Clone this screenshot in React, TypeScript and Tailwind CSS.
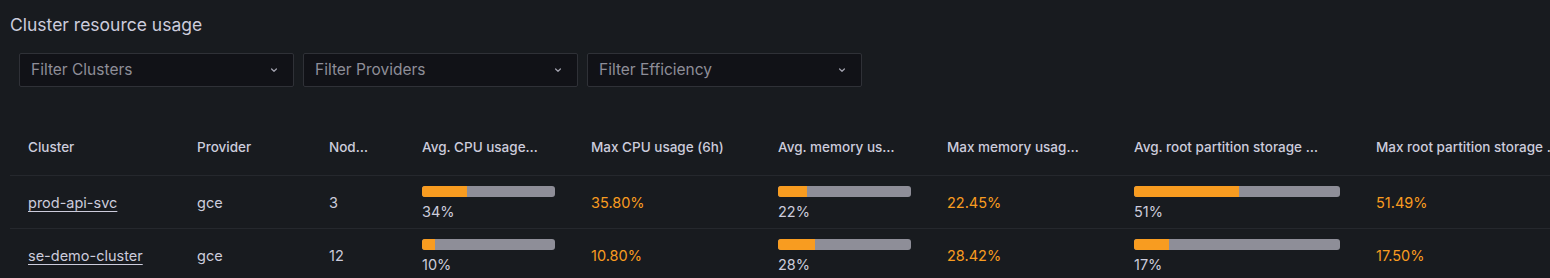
import React from "react";

const cols = [
  { key: "cluster", label: "Cluster", w: 169 },
  { key: "provider", label: "Provider", w: 132 },
  { key: "nodes", label: "Nodes", w: 93 },
  { key: "avgCpu", label: "Avg. CPU usage (6h)", w: 169 },
  { key: "maxCpu", label: "Max CPU usage (6h)", w: 187 },
  { key: "avgMem", label: "Avg. memory usage (6h)", w: 169 },
  { key: "maxMem", label: "Max memory usage (6h)", w: 187 },
  { key: "avgRoot", label: "Avg. root partition storage usage (6h)", w: 242 },
  { key: "maxRoot", label: "Max root partition storage usage (6h)", w: 242 },
];

const rows = [
  { cluster: "prod-api-svc", provider: "gce", nodes: "3", avgCpu: 34, maxCpu: "35.80%", avgMem: 22, maxMem: "22.45%", avgRoot: 51, maxRoot: "51.49%" },
  { cluster: "se-demo-cluster", provider: "gce", nodes: "12", avgCpu: 10, maxCpu: "10.80%", avgMem: 28, maxMem: "28.42%", avgRoot: 17, maxRoot: "17.50%" },
];

function Chevron() {
  return (
    <svg width="10" height="10" viewBox="0 0 10 10" fill="none" className="shrink-0">
      <path d="M2.6 4 L5 6.2 L7.4 4" stroke="#a0a0ac" strokeWidth="1.3" strokeLinecap="round" strokeLinejoin="round" />
    </svg>
  );
}

function Filter({ label }: { label: string }) {
  return (
    <div className="w-[275px] h-[34px] bg-[#111217] border border-[#2f3137] rounded-[2px] flex items-center justify-between pl-[11px] pr-[14px]">
      <span className="text-[15.5px] leading-[20px] text-[#8e8e98]">{label}</span>
      <Chevron />
    </div>
  );
}

function Bar({ v }: { v: number }) {
  return (
    <div className="flex flex-col pt-[10px]">
      <div className="h-[11px] w-full bg-[#8e8e98] rounded-[3px] overflow-hidden flex">
        <div className="h-full bg-[#f89c20]" style={{ width: `${v}%` }} />
      </div>
      <span className="text-[14.5px] text-[#ccccdc] leading-[16px] mt-[7px]">{v}%</span>
    </div>
  );
}

export default function App() {
  return (
    <div
      className="w-[1550px] h-[278px] bg-[#181b1f] overflow-hidden text-[#ccccdc]"
      style={{ fontFamily: "Inter, 'Noto Sans', sans-serif" }}
    >
      <div className="pl-[10px] pt-[13px] text-[17.5px] leading-[24px] text-[#ccccdc]">Cluster resource usage</div>
      <div className="flex gap-[9px] pl-[19px] mt-[16px]">
        <Filter label="Filter Clusters" />
        <Filter label="Filter Providers" />
        <Filter label="Filter Efficiency" />
      </div>
      <div className="ml-[10px] mt-[33px] w-max">
        <div className="flex h-[56px] items-center border-b border-[#25282d]">
          {cols.map((c) => (
            <div key={c.key} className="pl-[18px] shrink-0" style={{ width: c.w }}>
              <div
                className="text-[13.5px] font-medium truncate text-[#ccccdc]"
                style={{ maxWidth: c.w - 52 }}
              >
                {c.label}
              </div>
            </div>
          ))}
        </div>
        {rows.map((r, i) => (
          <div key={i} className="flex h-[53px] border-b border-[#25282d]">
            {cols.map((c) => {
              const val = (r as any)[c.key];
              const isBar = c.key.startsWith("avg");
              let content: React.ReactNode;
              if (c.key === "cluster") {
                content = <span className="underline underline-offset-[3px] text-[14.5px] text-[#ccccdc]">{val}</span>;
              } else if (isBar) {
                content = <Bar v={val} />;
              } else if (c.key.startsWith("max")) {
                content = <span className="text-[14.5px] text-[#f89c20]">{val}</span>;
              } else {
                content = <span className="text-[14.5px] text-[#ccccdc]">{val}</span>;
              }
              return (
                <div
                  key={c.key}
                  className={`px-[18px] shrink-0 flex flex-col ${isBar ? "justify-start" : "justify-center pt-[2px]"}`}
                  style={{ width: c.w }}
                >
                  {content}
                </div>
              );
            })}
          </div>
        ))}
      </div>
    </div>
  );
}
